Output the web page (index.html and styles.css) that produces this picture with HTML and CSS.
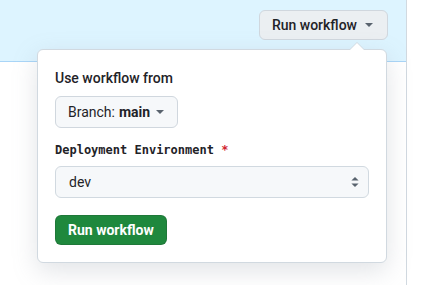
FILE: index.html
```html
<!DOCTYPE html>
<html lang="en">
<head>
  <meta charset="UTF-8" />
  <title>Run workflow</title>
  <link rel="stylesheet" href="styles.css">
</head>
<body>
  <div class="page">
    <div class="banner">
      <div class="dropdown">
        <button class="btn" type="button">Run workflow <span class="caret"></span></button>

        <div class="popover">
          <div class="popover-title">Use workflow from</div>
          <button class="btn btn-branch" type="button">Branch: <strong>main</strong> <span class="caret"></span></button>

          <div class="field">
            <label class="field-label" for="env">Deployment Environment <span class="required">*</span></label>
            <div class="select-wrap">
              <select id="env" class="select">
                <option>dev</option>
                <option>staging</option>
                <option>prod</option>
              </select>
              <svg class="select-icon" width="16" height="16" viewBox="0 0 16 16" aria-hidden="true">
                <path d="M4.4 6.5 8 2.9l3.6 3.6H4.4Z M4.4 9.5h7.2L8 13.1 4.4 9.5Z" fill="currentColor"/>
              </svg>
            </div>
          </div>

          <button class="btn btn-primary" type="submit">Run workflow</button>
        </div>
      </div>
    </div>
  </div>
</body>
</html>
```

FILE: styles.css
```css
:root {
  --fg: #1f2328;
  --muted: #59636e;
  --border: #d1d9e0;
  --btn-bg: #f6f8fa;
  --green: #1f883d;
  --banner: #ddf4ff;
}

* {
  box-sizing: border-box;
}

body {
  margin: 0;
  font-family: Roboto, "Noto Sans", sans-serif;
  font-size: 14px;
  color: var(--fg);
  background: #fff;
}

.page {
  width: 407px;
  height: 285px;
  border-right: 1px solid var(--border);
}

.banner {
  height: 62px;
  padding: 10px 18px 0 0;
  display: flex;
  justify-content: flex-end;
  align-items: flex-start;
  background: var(--banner);
  border-bottom: 1px solid #a9d5f7;
}

.dropdown {
  position: relative;
}

.btn {
  display: inline-flex;
  align-items: center;
  gap: 8px;
  height: 30px;
  padding: 0 14px 0 12px;
  font: inherit;
  font-weight: 500;
  line-height: 20px;
  color: var(--fg);
  background: #ebeff2;
  border: 1px solid #d0d7de;
  border-radius: 6px;
  cursor: pointer;
}

.caret {
  width: 0;
  height: 0;
  border-left: 4px solid transparent;
  border-right: 4px solid transparent;
  border-top: 4px solid var(--muted);
}

.popover {
  position: absolute;
  top: 39px;
  right: 1px;
  width: 350px;
  padding: 18px 17px 17px;
  background: #fff;
  border: 1px solid var(--border);
  border-radius: 6px;
  box-shadow: 0 8px 24px rgba(140, 149, 159, 0.25);
}

.popover::before,
.popover::after {
  content: "";
  position: absolute;
  right: 21px;
  border: 8px solid transparent;
}

.popover::before {
  top: -16px;
  border-bottom-color: var(--border);
}

.popover::after {
  top: -15px;
  border-bottom-color: #fff;
}

.popover-title {
  font-weight: 500;
  line-height: 20px;
  margin-bottom: 8px;
}

.btn-branch {
  height: 32px;
  padding: 0 13px 0 12px;
  font-weight: 400;
  background: var(--btn-bg);
  gap: 0;
}

.btn-branch strong {
  font-weight: 700;
  margin-left: 4px;
  margin-right: 6px;
}

.field {
  margin-top: 12px;
}

.field-label {
  display: block;
  font-family: "DejaVu Sans Mono", monospace;
  font-size: 12px;
  font-weight: 700;
  line-height: 20px;
  margin-bottom: 6px;
}

.required {
  color: #d1242f;
}

.select-wrap {
  position: relative;
}

.select {
  width: 100%;
  height: 32px;
  padding: 0 32px 0 13px;
  font: inherit;
  color: var(--fg);
  background: var(--btn-bg);
  border: 1px solid var(--border);
  border-radius: 6px;
  appearance: none;
}

.select-icon {
  position: absolute;
  right: 6px;
  top: 8px;
  color: var(--muted);
  pointer-events: none;
}

.btn-primary {
  margin-top: 17px;
  padding: 0 12px;
  font-weight: 700;
  color: #fff;
  background: var(--green);
  border-color: rgba(31, 35, 40, 0.15);
}
```
